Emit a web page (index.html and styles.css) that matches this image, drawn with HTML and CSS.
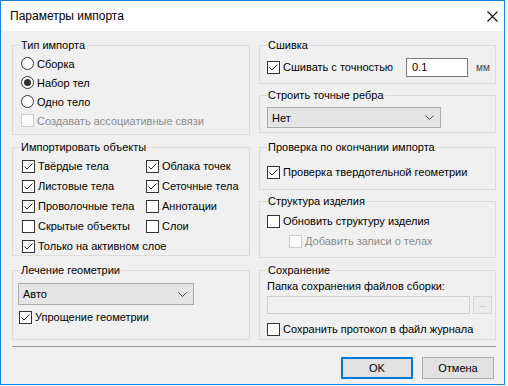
FILE: index.html
```html
<!DOCTYPE html>
<html lang="ru">

<head>
    <meta charset="UTF-8">
    <title>Параметры импорта</title>
    <link rel="stylesheet" href="styles.css">
</head>

<body>
    <div class="window">
        <div class="titlebar">
            <span class="title">Параметры импорта</span>
            <svg class="close" width="11" height="11" viewBox="0 0 11 11">
                <path d="M0.5 0.5 L10.5 10.5 M10.5 0.5 L0.5 10.5" stroke="#111" stroke-width="1.1" fill="none"/>
            </svg>
        </div>

        <div class="content">
            <div class="columns">
                <!-- left column -->
                <div class="col">
                    <fieldset class="group g-type">
                        <legend>Тип импорта</legend>
                        <div class="group-body">
                            <div class="check row19"><span class="radio"></span>Сборка</div>
                            <div class="check row19"><span class="radio on"></span>Набор тел</div>
                            <div class="check row19"><span class="radio"></span>Одно тело</div>
                            <div class="check row19 off"><span class="box"></span>Создавать ассоциативные связи</div>
                        </div>
                    </fieldset>

                    <fieldset class="group g-objects">
                        <legend>Импортировать объекты</legend>
                        <div class="group-body objects-grid">
                            <div class="check"><span class="box"><svg width="11" height="11" viewBox="0 0 11 11"><path d="M1.5 5.5 L4 8 L9.5 2.5" fill="none" stroke="#222"/></svg></span>Твёрдые тела</div>
                            <div class="check"><span class="box"><svg width="11" height="11" viewBox="0 0 11 11"><path d="M1.5 5.5 L4 8 L9.5 2.5" fill="none" stroke="#222"/></svg></span>Облака точек</div>
                            <div class="check"><span class="box"><svg width="11" height="11" viewBox="0 0 11 11"><path d="M1.5 5.5 L4 8 L9.5 2.5" fill="none" stroke="#222"/></svg></span>Листовые тела</div>
                            <div class="check"><span class="box"><svg width="11" height="11" viewBox="0 0 11 11"><path d="M1.5 5.5 L4 8 L9.5 2.5" fill="none" stroke="#222"/></svg></span>Сеточные тела</div>
                            <div class="check"><span class="box"><svg width="11" height="11" viewBox="0 0 11 11"><path d="M1.5 5.5 L4 8 L9.5 2.5" fill="none" stroke="#222"/></svg></span>Проволочные тела</div>
                            <div class="check"><span class="box"></span>Аннотации</div>
                            <div class="check"><span class="box"></span>Скрытые объекты</div>
                            <div class="check"><span class="box"></span>Слои</div>
                            <div class="check wide"><span class="box"><svg width="11" height="11" viewBox="0 0 11 11"><path d="M1.5 5.5 L4 8 L9.5 2.5" fill="none" stroke="#222"/></svg></span>Только на активном слое</div>
                        </div>
                    </fieldset>

                    <fieldset class="group g-heal">
                        <legend>Лечение геометрии</legend>
                        <div class="group-body">
                            <div class="select heal-select">
                                <span>Авто</span>
                                <svg width="9" height="5" viewBox="0 0 9 5"><path d="M0.5 0.5 L4.5 4.5 L8.5 0.5" fill="none" stroke="#444"/></svg>
                            </div>
                            <div class="check simplify"><span class="box"><svg width="11" height="11" viewBox="0 0 11 11"><path d="M1.5 5.5 L4 8 L9.5 2.5" fill="none" stroke="#222"/></svg></span>Упрощение геометрии</div>
                        </div>
                    </fieldset>
                </div>

                <!-- right column -->
                <div class="col">
                    <fieldset class="group g-stitch">
                        <legend>Сшивка</legend>
                        <div class="group-body stitch-row">
                            <div class="check"><span class="box"><svg width="11" height="11" viewBox="0 0 11 11"><path d="M1.5 5.5 L4 8 L9.5 2.5" fill="none" stroke="#222"/></svg></span>Сшивать с точностью</div>
                            <div class="textbox">0.1</div>
                            <span class="unit">мм</span>
                        </div>
                    </fieldset>

                    <fieldset class="group g-edges">
                        <legend>Строить точные ребра</legend>
                        <div class="group-body">
                            <div class="select edges-select">
                                <span>Нет</span>
                                <svg width="9" height="5" viewBox="0 0 9 5"><path d="M0.5 0.5 L4.5 4.5 L8.5 0.5" fill="none" stroke="#444"/></svg>
                            </div>
                        </div>
                    </fieldset>

                    <fieldset class="group g-check">
                        <legend>Проверка по окончании импорта</legend>
                        <div class="group-body">
                            <div class="check"><span class="box"><svg width="11" height="11" viewBox="0 0 11 11"><path d="M1.5 5.5 L4 8 L9.5 2.5" fill="none" stroke="#222"/></svg></span>Проверка твердотельной геометрии</div>
                        </div>
                    </fieldset>

                    <fieldset class="group g-struct">
                        <legend>Структура изделия</legend>
                        <div class="group-body">
                            <div class="check"><span class="box"></span>Обновить структуру изделия</div>
                            <div class="check off indent"><span class="box"></span>Добавить записи о телах</div>
                        </div>
                    </fieldset>

                    <fieldset class="group g-save">
                        <legend>Сохранение</legend>
                        <div class="group-body">
                            <div class="caption">Папка сохранения файлов сборки:</div>
                            <div class="path-row">
                                <div class="textbox disabled"></div>
                                <div class="browse">...</div>
                            </div>
                            <div class="check log"><span class="box"></span>Сохранить протокол в файл журнала</div>
                        </div>
                    </fieldset>
                </div>
            </div>

            <div class="separator"></div>

            <div class="buttons">
                <button class="btn default">OK</button>
                <button class="btn">Отмена</button>
            </div>
        </div>
    </div>
</body>

</html>
```

FILE: styles.css
```css
* {
    box-sizing: border-box;
}

body {
    margin: 0;
    background: #fff;
    font-family: "Liberation Sans", Arial, sans-serif;
    font-size: 11px;
    color: #000;
}

.window {
    width: 505px;
    height: 385px;
    border: 1px solid #1883d7;
    background: #f0f0f0;
    display: flex;
    flex-direction: column;
}

.titlebar {
    height: 30px;
    flex: none;
    background: #fff;
    display: flex;
    align-items: center;
    justify-content: space-between;
    padding: 0 6px 0 9px;
    font-size: 12px;
}

.content {
    flex: 1;
    padding: 0 7px 0 11px;
}

.columns {
    display: grid;
    grid-template-columns: 238px 237px;
    column-gap: 9px;
}

/* group boxes */
.group {
    margin: 0;
    padding: 0;
    border: 1px solid #dcdcdc;
    min-width: 0;
}

.group legend {
    margin-left: 7px;
    padding: 0 1px;
    line-height: 16px;
}

.g-type    { margin-top: 6px; height: 98px; }
.g-objects { margin-top: 4px; height: 117px; }
.g-heal    { margin-top: 6px; height: 78px; }
.g-stitch  { margin-top: 6px; height: 47px; }
.g-edges   { margin-top: 3px; height: 46px; }
.g-check   { margin-top: 6px; height: 51px; }
.g-struct  { margin-top: 3px; height: 65px; }
.g-save    { margin-top: 4px; height: 78px; }

.g-type .group-body    { padding: 1px 0 0 8px; }
.g-objects .group-body { padding: 1px 0 0 9px; }
.g-heal .group-body    { padding: 5px 0 0 5px; }
.g-stitch .group-body  { padding: 4px 0 0 7px; }
.g-edges .group-body   { padding: 4px 0 0 7px; }
.g-check .group-body   { padding: 7px 0 0 7px; }
.g-struct .group-body  { padding: 2px 0 0 7px; }
.g-save .group-body    { padding: 0 0 0 7px; }

/* checkbox / radio rows */
.check {
    display: flex;
    align-items: center;
    gap: 3px;
    height: 20px;
    white-space: nowrap;
}

.check.row19 {
    height: 19px;
}

.check.off {
    color: #8d8d8d;
}

.check.indent {
    padding-left: 22px;
}

.box {
    width: 13px;
    height: 13px;
    flex: none;
    border: 1px solid #333;
    background: #fff;
    display: flex;
}

.check.off .box {
    border-color: #cccccc;
    background: #fcfcfc;
}

.radio {
    width: 13px;
    height: 13px;
    flex: none;
    border: 1px solid #333;
    border-radius: 50%;
    background: #fff;
    display: flex;
    align-items: center;
    justify-content: center;
}

.radio.on::after {
    content: "";
    width: 7px;
    height: 7px;
    border-radius: 50%;
    background: #333;
}

.objects-grid {
    display: grid;
    grid-template-columns: 124px auto;
}

.objects-grid .wide {
    grid-column: 1 / 3;
}

/* dropdowns */
.select {
    display: flex;
    align-items: center;
    justify-content: space-between;
    height: 22px;
    border: 1px solid #acacac;
    background: #e5e5e5;
    padding: 0 6px 0 4px;
}

.heal-select {
    width: 176px;
}

.edges-select {
    width: 174px;
    height: 21px;
}

.simplify {
    margin-top: 2px;
    padding-left: 1px;
}

/* stitching row */
.stitch-row {
    display: grid;
    grid-template-columns: 139px 62px auto;
    align-items: center;
}

.textbox {
    height: 19px;
    border: 1px solid #7a7a7a;
    background: #fff;
    padding: 0 5px;
    line-height: 17px;
}

.unit {
    margin-left: 8px;
    font-size: 10px;
    color: #444;
}

/* save group */
.caption {
    line-height: 16px;
}

.path-row {
    display: flex;
    gap: 3px;
    margin-top: 2px;
}

.textbox.disabled {
    width: 203px;
    height: 18px;
    border-color: #cfcfcf;
    background: #f0f0f0;
}

.browse {
    width: 19px;
    height: 18px;
    border: 1px solid #d5d5d5;
    background: #ebebeb;
    color: #a0a0a0;
    font-size: 9px;
    text-align: center;
    line-height: 14px;
}

.check.log {
    margin-top: 5px;
}

/* bottom */
.separator {
    margin-top: 6px;
    height: 1px;
    margin-right: 1px;
    background: #a0a0a0;
}

.buttons {
    display: flex;
    justify-content: flex-end;
    gap: 9px;
    margin-top: 10px;
    padding-right: 3px;
}

.btn {
    width: 72px;
    height: 22px;
    font-family: inherit;
    font-size: 11px;
    color: #000;
    background: #e1e1e1;
    border: 1px solid #adadad;
    padding: 0;
}

.btn.default {
    border: 2px solid #0078d7;
}
```
